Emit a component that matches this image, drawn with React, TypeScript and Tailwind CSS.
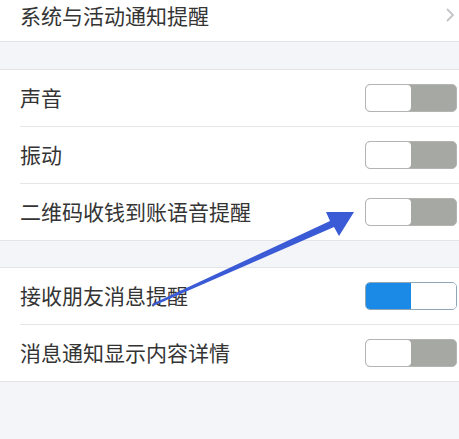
import React from "react";

type Row = { label: string; on?: boolean };

function Toggle({ on }: { on?: boolean }) {
  if (on) {
    return (
      <div className="flex h-[28px] w-[92px] overflow-hidden rounded-[5px] border border-[#8fa6b8]">
        <div className="w-[45px] bg-[#1a8ae6]" />
        <div className="flex-1 bg-white" />
      </div>
    );
  }
  return (
    <div className="flex h-[28px] w-[92px] overflow-hidden rounded-[5px] border border-[#b4b5b2] bg-[#a6a8a4]">
      <div className="w-[45px] rounded-[4px] bg-white" />
      <div className="flex-1" />
    </div>
  );
}

function Group({ rows }: { rows: Row[] }) {
  return (
    <div className="border-y border-[#e3e3e8] bg-white">
      {rows.map((r, i) => (
        <div key={r.label}>
          {i > 0 && <div className="ml-[20px] h-px bg-[#e6e6ea]" />}
          <div className="flex h-[56px] items-center justify-between pl-[20px] pr-[2px]">
            <span className="text-[21px] text-[#343434]">{r.label}</span>
            <Toggle on={r.on} />
          </div>
        </div>
      ))}
    </div>
  );
}

export default function App() {
  return (
    <div
      className="relative h-[439px] w-[459px] overflow-hidden bg-[#f4f5f9]"
      style={{ fontFamily: '"Noto Sans CJK SC", "Noto Sans", sans-serif' }}
    >
      <div className="flex h-[42px] items-center justify-between border-b border-[#e3e3e8] bg-white pb-[12px] pl-[20px] pr-[4px]">
        <span className="text-[21px] leading-[30px] text-[#343434]">系统与活动通知提醒</span>
        <svg width="10" height="16" viewBox="0 0 10 16" fill="none">
          <path d="M2 2l6 6-6 6" stroke="#c4c4c8" strokeWidth="1.8" />
        </svg>
      </div>
      <div className="h-[27px]" />
      <Group rows={[{ label: "声音" }, { label: "振动" }, { label: "二维码收钱到账语音提醒" }]} />
      <div className="h-[26px]" />
      <Group rows={[{ label: "接收朋友消息提醒", on: true }, { label: "消息通知显示内容详情" }]} />

      <svg className="pointer-events-none absolute left-0 top-0" width="459" height="439">
        <polygon
          points="152,304 330,221 326,212 354,212 339,236 334,227 153,306"
          fill="#3a5ad6"
        />
      </svg>
    </div>
  );
}
